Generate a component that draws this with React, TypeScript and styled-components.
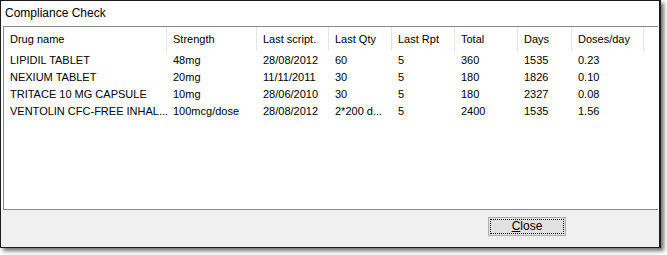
import styled, { createGlobalStyle } from "styled-components";

const GlobalStyle = createGlobalStyle`
    body {
        margin: 0;
        background: #ffffff;
        font-family: "Liberation Sans", Arial, sans-serif;
    }
`;

type Drug = {
    name: string;
    strength: string;
    lastScript: string;
    lastQty: string;
    lastRpt: string;
    total: string;
    days: string;
    doses: string;
};

const columns = [
    { label: "Drug name", width: 163 },
    { label: "Strength", width: 90 },
    { label: "Last script.", width: 72 },
    { label: "Last Qty", width: 63 },
    { label: "Last Rpt", width: 63 },
    { label: "Total", width: 63 },
    { label: "Days", width: 54 },
    { label: "Doses/day", width: 72 },
];

const drugs: Drug[] = [
    { name: "LIPIDIL TABLET", strength: "48mg", lastScript: "28/08/2012", lastQty: "60", lastRpt: "5", total: "360", days: "1535", doses: "0.23" },
    { name: "NEXIUM TABLET", strength: "20mg", lastScript: "11/11/2011", lastQty: "30", lastRpt: "5", total: "180", days: "1826", doses: "0.10" },
    { name: "TRITACE 10 MG CAPSULE", strength: "10mg", lastScript: "28/06/2010", lastQty: "30", lastRpt: "5", total: "180", days: "2327", doses: "0.08" },
    { name: "VENTOLIN CFC-FREE INHAL...", strength: "100mcg/dose", lastScript: "28/08/2012", lastQty: "2*200 d...", lastRpt: "5", total: "2400", days: "1535", doses: "1.56" },
];

export default function App() {
    return (
        <>
            <GlobalStyle />
            <Page>
                <Window>
                    <TitleBar>Compliance Check</TitleBar>
                    <ListView>
                        <HeaderRow>
                            {columns.map((c) => (
                                <HeaderCell key={c.label} $w={c.width}>
                                    {c.label}
                                </HeaderCell>
                            ))}
                        </HeaderRow>
                        {drugs.map((d) => (
                            <Row key={d.name}>
                                {[d.name, d.strength, d.lastScript, d.lastQty, d.lastRpt, d.total, d.days, d.doses].map((v, i) => (
                                    <Cell key={i} $w={columns[i].width}>
                                        {v}
                                    </Cell>
                                ))}
                            </Row>
                        ))}
                    </ListView>
                    <Footer>
                        <CloseButton>
                            <FocusRing>
                                <u>C</u>lose
                            </FocusRing>
                        </CloseButton>
                    </Footer>
                </Window>
            </Page>
        </>
    );
}

const Page = styled.div`
    width: 667px;
    height: 255px;
`;

const Window = styled.div`
    width: 658px;
    height: 246px;
    border: 1px solid #1c1c1c;
    border-right-width: 2px;
    display: flex;
    flex-direction: column;
    background: #ffffff;
    box-shadow: 3px 3px 4px rgba(0, 0, 0, 0.55);
`;

const TitleBar = styled.div`
    height: 25px;
    padding-left: 4px;
    padding-bottom: 1px;
    box-sizing: border-box;
    display: flex;
    align-items: center;
    font-size: 12px;
    color: #000;
`;

const ListView = styled.div`
    flex: 1;
    margin: 0 1px 0 2px;
    border: 1px solid #828790;
    border-right: none;
    background: #ffffff;
`;

const HeaderRow = styled.div`
    display: flex;
    height: 24px;
`;

const HeaderCell = styled.div<{ $w: number }>`
    width: ${(p) => p.$w}px;
    flex-shrink: 0;
    box-sizing: border-box;
    padding-left: 6px;
    border-right: 1px solid #e5e5e5;
    display: flex;
    align-items: center;
    font-size: 11px;
    color: #000;
    white-space: nowrap;
`;

const Row = styled.div`
    display: flex;
    height: 17px;
    align-items: center;
`;

const Cell = styled.div<{ $w: number }>`
    width: ${(p) => p.$w}px;
    flex-shrink: 0;
    box-sizing: border-box;
    padding-left: 6px;
    font-size: 11px;
    color: #000;
    white-space: nowrap;
    overflow: hidden;
`;

const Footer = styled.div`
    height: 37px;
    background: #f0f0f0;
    display: flex;
    align-items: flex-start;
    padding-top: 7px;
    padding-left: 487px;
    box-sizing: border-box;
`;

const CloseButton = styled.button`
    width: 78px;
    height: 19px;
    padding: 1px;
    border: 1px solid #adadad;
    background: #e1e1e1;
    box-sizing: border-box;
    font-family: "Liberation Sans", Arial, sans-serif;
    font-size: 12px;
    color: #000;
    display: flex;
`;

const FocusRing = styled.span`
    flex: 1;
    border: 1px dotted #000;
    display: flex;
    align-items: center;
    justify-content: center;
    line-height: 13px;
`;
